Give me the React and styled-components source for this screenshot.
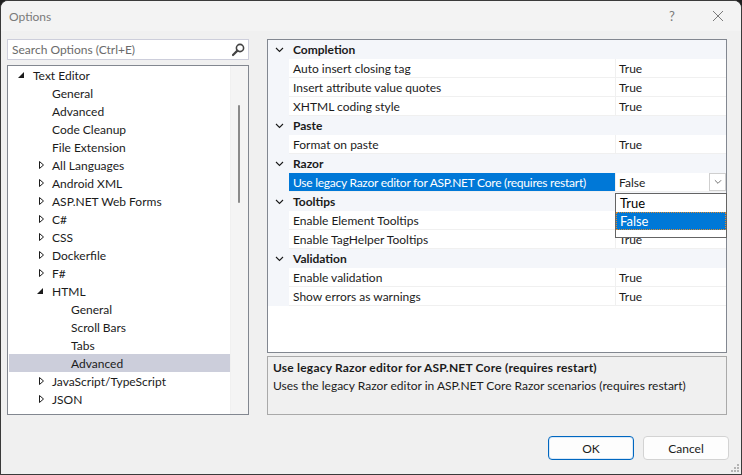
import React from "react";
import styled, { createGlobalStyle } from "styled-components";

const GlobalStyle = createGlobalStyle`
  html, body {
    margin: 0;
    padding: 0;
    background: #1f1f1f;
  }
  body {
    font-family: Lato, "Segoe UI", "Liberation Sans", sans-serif;
    font-size: 12px;
    color: #1b1b1b;
  }
  * { box-sizing: border-box; }
`;

const Window = styled.div`
  position: relative;
  width: 742px;
  height: 475px;
  border: 1px solid #3a3a3a;
  border-radius: 8px 8px 0 0;
  background: #f0f0f0;
  display: flex;
  flex-direction: column;
  overflow: hidden;
`;

const TitleBar = styled.div`
  height: 30px;
  flex: none;
  display: flex;
  align-items: center;
  padding-left: 8px;
  background: #f3f3f3;
  color: #7a7a7a;
  font-size: 12px;
`;

const TitleText = styled.div`
  flex: 1;
`;

const TitleButton = styled.div`
  width: 46px;
  height: 30px;
  display: flex;
  align-items: center;
  justify-content: center;
  color: #7a7a7a;
  font-size: 13px;
`;

const Body = styled.div`
  display: grid;
  grid-template-columns: 242px 460px;
  column-gap: 18px;
  padding: 8px 0 0 6px;
  height: 384px;
`;

const LeftColumn = styled.div`
  display: flex;
  flex-direction: column;
  gap: 5px;
`;

const SearchBox = styled.div`
  height: 21px;
  display: flex;
  align-items: center;
  padding: 0 3px 0 4px;
  border: 1px solid #cdcedb;
  background: #fff;
  color: #6b6b6b;
`;

const SearchText = styled.span`
  flex: 1;
`;

const TreePanel = styled.div`
  height: 350px;
  border: 1px solid #828790;
  background: #fff;
  display: flex;
`;

const TreeList = styled.div`
  flex: 1;
`;

const TreeRow = styled.div`
  height: 18px;
  display: flex;
  align-items: center;
  margin-left: 1px;
  padding-left: ${(p) => 5 + p.$level * 19}px;
  background: ${(p) => (p.$selected ? "#cccedb" : "transparent")};
  white-space: nowrap;
`;

const Expander = styled.span`
  width: 19px;
  height: 18px;
  flex: none;
  display: flex;
  align-items: center;
  padding-left: 3px;
`;

const ScrollTrack = styled.div`
  width: 18px;
  flex: none;
  background: #f4f4f4;
  border-left: 1px solid #f0f0f0;
  position: relative;
`;

const ScrollThumb = styled.div`
  position: absolute;
  left: 7px;
  top: 39px;
  width: 2px;
  height: 98px;
  border-radius: 1px;
  background: #8a8a8a;
`;

const RightColumn = styled.div`
  display: flex;
  flex-direction: column;
  gap: 3px;
`;

const PropertyGrid = styled.div`
  position: relative;
  height: 314px;
  border: 1px solid #828790;
  background: #fff;
`;

const CategoryRow = styled.div`
  height: 19px;
  display: grid;
  grid-template-columns: 21px 1fr;
  align-items: center;
  background: #f4f6fa;
  font-weight: 700;
`;

const Chevron = styled.span`
  display: flex;
  justify-content: center;
  padding-left: 2px;
`;

const CategoryName = styled.span`
  padding-left: 4px;
`;

const PropRow = styled.div`
  height: 19px;
  display: grid;
  grid-template-columns: 21px 327px 1fr;
  background: #fff;
`;

const Gutter = styled.div`
  background: #f4f6fa;
`;

const NameCell = styled.div`
  display: flex;
  align-items: center;
  padding-left: 4px;
  border-right: 1px solid #f0f0f0;
  border-bottom: 1px solid #f0f0f0;
  background: ${(p) => (p.$selected ? "#0078d7" : "#fff")};
  color: ${(p) => (p.$selected ? "#fff" : "inherit")};
  letter-spacing: ${(p) => (p.$selected ? "-0.25px" : "normal")};
  white-space: nowrap;
`;

const ValueCell = styled.div`
  display: flex;
  align-items: center;
  padding-left: 3px;
  border-bottom: 1px solid #f0f0f0;
`;

const ValueText = styled.span`
  flex: 1;
`;

const DropButton = styled.span`
  width: 17px;
  height: 18px;
  display: flex;
  align-items: center;
  justify-content: center;
  border: 1px solid #cfcfcf;
  background: #fff;
`;

const DropList = styled.div`
  position: absolute;
  left: 347px;
  top: 153px;
  width: 112px;
  height: 45px;
  border: 1px solid #646464;
  background: #fff;
`;

const DropItem = styled.div`
  height: 18px;
  display: flex;
  align-items: center;
  padding-left: 3px;
  font-size: 13px;
  background: ${(p) => (p.$active ? "#0078d7" : "#fff")};
  color: ${(p) => (p.$active ? "#fff" : "#000")};
  border: 1px dotted ${(p) => (p.$active ? "#e08a2c" : "transparent")};
`;

const Description = styled.div`
  height: 59px;
  border: 1px solid #a9a9a9;
  background: #f0f0f0;
  padding: 2px 5px;
  line-height: 18px;
`;

const DescTitle = styled.div`
  font-weight: 700;
  letter-spacing: 0.2px;
`;

const Footer = styled.div`
  display: flex;
  justify-content: flex-end;
  gap: 9px;
  padding: 21px 12px 0 0;
`;

const Button = styled.button`
  width: 86px;
  height: 24px;
  border-radius: 4px;
  font-family: inherit;
  font-size: 12px;
  color: #1b1b1b;
  background: #fdfdfd;
  border: 1px solid ${(p) => (p.$primary ? "#0067c0" : "#d3d3d3")};
  box-shadow: ${(p) => (p.$primary ? "inset 0 0 0 1px #d9e8f7" : "none")};
`;

const Grip = styled.svg`
  position: absolute;
  right: 1px;
  bottom: 1px;
`;

const OpenArrow = () => (
  <svg width="8" height="8" viewBox="0 0 8 8">
    <polygon points="1,7 7,7 7,1" fill="#1b1b1b" />
  </svg>
);

const ClosedArrow = () => (
  <svg width="8" height="10" viewBox="0 0 8 10" style={{ marginLeft: 2 }}>
    <polygon points="1.5,1.5 5.5,5 1.5,8.5" fill="none" stroke="#1b1b1b" strokeWidth="1" />
  </svg>
);

const DownChevron = ({ color = "#1b1b1b", size = 9 }) => (
  <svg width={size} height="6" viewBox="0 0 9 6">
    <polyline points="1,1 4.5,4.5 8,1" fill="none" stroke={color} strokeWidth="1.1" />
  </svg>
);

const treeItems = [
  { label: "Text Editor", level: 0, arrow: "open" },
  { label: "General", level: 1 },
  { label: "Advanced", level: 1 },
  { label: "Code Cleanup", level: 1 },
  { label: "File Extension", level: 1 },
  { label: "All Languages", level: 1, arrow: "closed" },
  { label: "Android XML", level: 1, arrow: "closed" },
  { label: "ASP.NET Web Forms", level: 1, arrow: "closed" },
  { label: "C#", level: 1, arrow: "closed" },
  { label: "CSS", level: 1, arrow: "closed" },
  { label: "Dockerfile", level: 1, arrow: "closed" },
  { label: "F#", level: 1, arrow: "closed" },
  { label: "HTML", level: 1, arrow: "open" },
  { label: "General", level: 2 },
  { label: "Scroll Bars", level: 2 },
  { label: "Tabs", level: 2 },
  { label: "Advanced", level: 2, selected: true },
  { label: "JavaScript/TypeScript", level: 1, arrow: "closed" },
  { label: "JSON", level: 1, arrow: "closed" },
];

const categories = [
  {
    name: "Completion",
    props: [
      ["Auto insert closing tag", "True"],
      ["Insert attribute value quotes", "True"],
      ["XHTML coding style", "True"],
    ],
  },
  { name: "Paste", props: [["Format on paste", "True"]] },
  {
    name: "Razor",
    props: [["Use legacy Razor editor for ASP.NET Core (requires restart)", "False", true]],
  },
  {
    name: "Tooltips",
    props: [
      ["Enable Element Tooltips", "True"],
      ["Enable TagHelper Tooltips", "True"],
    ],
  },
  {
    name: "Validation",
    props: [
      ["Enable validation", "True"],
      ["Show errors as warnings", "True"],
    ],
  },
];

const App = () => (
  <>
    <GlobalStyle />
    <Window>
      <TitleBar>
        <TitleText>Options</TitleText>
        <TitleButton>?</TitleButton>
        <TitleButton>
          <svg width="12" height="12" viewBox="0 0 12 12">
            <path d="M1 1 L11 11 M11 1 L1 11" stroke="#7a7a7a" strokeWidth="1" />
          </svg>
        </TitleButton>
      </TitleBar>

      <Body>
        <LeftColumn>
          <SearchBox>
            <SearchText>Search Options (Ctrl+E)</SearchText>
            <svg width="14" height="14" viewBox="0 0 14 14">
              <circle cx="9" cy="5" r="3.6" fill="none" stroke="#444" strokeWidth="1.6" />
              <path d="M6.4 7.6 L2 12" stroke="#444" strokeWidth="2.2" strokeLinecap="round" />
            </svg>
          </SearchBox>
          <TreePanel>
            <TreeList>
              {treeItems.map((item, i) => (
                <TreeRow key={i} $level={item.level} $selected={item.selected}>
                  <Expander>
                    {item.arrow === "open" && <OpenArrow />}
                    {item.arrow === "closed" && <ClosedArrow />}
                  </Expander>
                  {item.label}
                </TreeRow>
              ))}
            </TreeList>
            <ScrollTrack>
              <ScrollThumb />
            </ScrollTrack>
          </TreePanel>
        </LeftColumn>

        <RightColumn>
          <PropertyGrid>
            {categories.map((cat) => (
              <React.Fragment key={cat.name}>
                <CategoryRow>
                  <Chevron>
                    <DownChevron />
                  </Chevron>
                  <CategoryName>{cat.name}</CategoryName>
                </CategoryRow>
                {cat.props.map(([name, value, selected]) => (
                  <PropRow key={name}>
                    <Gutter />
                    <NameCell $selected={selected}>{name}</NameCell>
                    <ValueCell>
                      <ValueText>{value}</ValueText>
                      {selected && (
                        <DropButton>
                          <DownChevron color="#707070" size={8} />
                        </DropButton>
                      )}
                    </ValueCell>
                  </PropRow>
                ))}
              </React.Fragment>
            ))}
            <DropList>
              <DropItem>True</DropItem>
              <DropItem $active>False</DropItem>
            </DropList>
          </PropertyGrid>
          <Description>
            <DescTitle>Use legacy Razor editor for ASP.NET Core (requires restart)</DescTitle>
            <div>Uses the legacy Razor editor in ASP.NET Core Razor scenarios (requires restart)</div>
          </Description>
        </RightColumn>
      </Body>

      <Footer>
        <Button $primary>OK</Button>
        <Button>Cancel</Button>
      </Footer>

      <Grip width="10" height="10" viewBox="0 0 10 10">
        {[
          [7, 1],
          [7, 4],
          [4, 4],
          [7, 7],
          [4, 7],
          [1, 7],
        ].map(([x, y]) => (
          <rect key={`${x}-${y}`} x={x} y={y} width="2" height="2" fill="#b4b4b4" />
        ))}
      </Grip>
    </Window>
  </>
);

export default App;
